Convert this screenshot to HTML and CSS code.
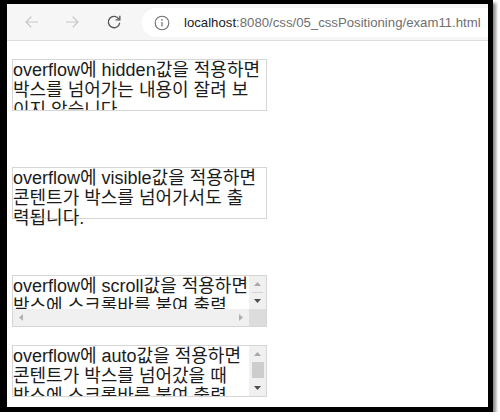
FILE: index.html
```html
<!DOCTYPE html>
<html lang="ko">
<head>
<meta charset="utf-8">
<title>exam11</title>
<link rel="stylesheet" href="styles.css">
</head>
<body>
<div class="frame">
  <div class="toolbar">
    <span class="nav nav-back">
      <svg width="18" height="18" viewBox="0 0 24 24"><path d="M20 12H4.5M11 5l-7 7 7 7" fill="none" stroke="#c6c6c6" stroke-width="1.6"/></svg>
    </span>
    <span class="nav nav-fwd">
      <svg width="18" height="18" viewBox="0 0 24 24"><path d="M4 12h15.5M13 5l7 7-7 7" fill="none" stroke="#c6c6c6" stroke-width="1.6"/></svg>
    </span>
    <span class="nav nav-reload">
      <svg width="18" height="18" viewBox="0 0 24 24"><path d="M18.6 8.2A7.6 7.6 0 1 0 19.6 13" fill="none" stroke="#555" stroke-width="1.8"/><path d="M19.8 3.6v5.6h-5.6" fill="none" stroke="#555" stroke-width="1.8"/></svg>
    </span>
    <div class="omnibox">
      <svg class="info" width="16" height="16" viewBox="0 0 16 16"><circle cx="8" cy="8" r="6.8" fill="none" stroke="#6e6e6e" stroke-width="1.1"/><path d="M8 7v4.6" stroke="#6e6e6e" stroke-width="1.2"/><circle cx="8" cy="4.9" r="0.8" fill="#6e6e6e"/></svg>
      <span class="url"><span class="host">localhost</span>:8080/css/05_cssPositioning/exam11.html</span>
    </div>
  </div>
  <div class="page">
    <div class="box box-hidden">overflow에 hidden값을 적용하면<br>박스를 넘어가는 내용이 잘려 보<br>이지 않습니다.</div>
    <div class="box box-visible">overflow에 visible값을 적용하면<br>콘텐트가 박스를 넘어가서도 출<br>력됩니다.</div>
    <div class="box box-scroll">
      <div class="clip">overflow에 scroll값을 적용하면<br>박스에 스크롤바를 붙여 출력<br>합니다.</div>
      <div class="vbar">
        <span class="sbtn"><svg width="7" height="4" viewBox="0 0 7 4"><path d="M0 4L3.5 0L7 4z" fill="#a8a8a8"/></svg></span>
        <span class="vtrack vtrack-thin"></span>
        <span class="sbtn"><svg width="7" height="4" viewBox="0 0 7 4"><path d="M0 0L3.5 4L7 0z" fill="#4d4d4d"/></svg></span>
      </div>
      <div class="hbar">
        <span class="hbtn"><svg width="4" height="7" viewBox="0 0 4 7"><path d="M4 0L0 3.5L4 7z" fill="#b0b0b0"/></svg></span>
        <span class="htrack"></span>
        <span class="hbtn"><svg width="4" height="7" viewBox="0 0 4 7"><path d="M0 0L4 3.5L0 7z" fill="#b0b0b0"/></svg></span>
      </div>
      <div class="corner"></div>
    </div>
    <div class="box box-auto">
      <div class="clip">overflow에 auto값을 적용하면<br>콘텐트가 박스를 넘어갔을 때<br>박스에 스크롤바를 붙여 출력<br>합니다.</div>
      <div class="vbar">
        <span class="sbtn"><svg width="7" height="4" viewBox="0 0 7 4"><path d="M0 4L3.5 0L7 4z" fill="#a8a8a8"/></svg></span>
        <span class="vtrack"><span class="thumb"></span></span>
        <span class="sbtn"><svg width="7" height="4" viewBox="0 0 7 4"><path d="M0 0L3.5 4L7 0z" fill="#4d4d4d"/></svg></span>
      </div>
    </div>
  </div>
</div>
</body>
</html>
```
FILE: styles.css
```css
html, body {
  margin: 0;
  padding: 0;
  background: #ffffff;
}

.frame {
  width: 481px;
  height: 403px;
  border-style: solid;
  border-color: #000;
  border-width: 4px 5px 5px 7px;
  box-shadow: 3px 3px 3px rgba(0, 0, 0, 0.45);
  overflow: hidden;
  background: #fff;
}

.toolbar {
  height: 36px;
  background: #f6f6f6;
  border-bottom: 1px solid #dedede;
  display: flex;
  align-items: center;
  padding-left: 5px;
  overflow: hidden;
}

.nav {
  display: flex;
  align-items: center;
  justify-content: center;
  width: 40px;
  height: 36px;
}

.nav-reload {
  width: 44px;
}

.omnibox {
  flex: 1;
  height: 29px;
  margin-left: 6px;
  margin-right: -30px;
  background: #fff;
  border-radius: 15px 0 0 15px;
  display: flex;
  align-items: center;
  padding-left: 12px;
  margin-top: 1px;
}

.info {
  flex: none;
}

.url {
  margin-left: 14px;
  font-family: "Liberation Sans", Arial, sans-serif;
  font-size: 13.2px;
  color: #6f6f6f;
  white-space: nowrap;
}

.host {
  color: #202124;
}

.page {
  padding: 18px 0 0 5px;
}

.box {
  width: 253px;
  height: 50px;
  border: 1px solid #d6d6d6;
  font-family: "Liberation Sans", "Noto Sans CJK KR", sans-serif;
  font-size: 18px;
  line-height: 20px;
  color: #1b1b1b;
}

.box-hidden {
  overflow: hidden;
  margin-bottom: 56px;
}

.box-visible {
  overflow: visible;
  margin-bottom: 56px;
}

.box-scroll {
  overflow: hidden;
  display: grid;
  grid-template-columns: 1fr 17px;
  grid-template-rows: 1fr 17px;
  margin-bottom: 18px;
}

.box-auto {
  overflow: hidden;
  display: grid;
  grid-template-columns: 1fr 17px;
  grid-template-rows: 1fr;
}

.clip {
  overflow: hidden;
  min-width: 0;
  min-height: 0;
}

.vbar {
  display: flex;
  flex-direction: column;
  background: #f0f0f0;
  min-height: 0;
}

.sbtn {
  flex: none;
  height: 16px;
  display: flex;
  align-items: center;
  justify-content: center;
}

.vtrack {
  flex: 1;
  min-height: 0;
}

.vtrack-thin {
  background: #d4d4d4;
  margin: 0 3px;
}

.thumb {
  display: block;
  height: 16px;
  margin: 0 2px 0 3px;
  background: #cdcdcd;
}

.hbar {
  display: flex;
  background: #f0f0f0;
}

.hbtn {
  flex: none;
  width: 16px;
  display: flex;
  align-items: center;
  justify-content: center;
}

.htrack {
  flex: 1;
}

.corner {
  background: #dcdcdc;
}
```
